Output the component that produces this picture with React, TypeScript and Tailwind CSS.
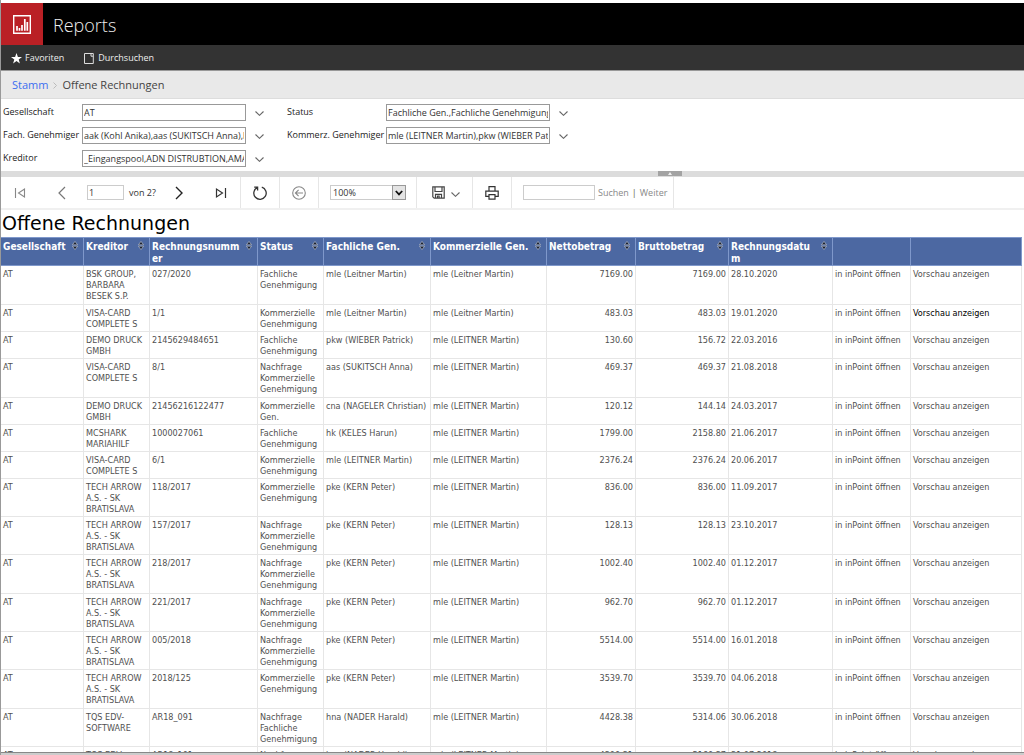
import React from "react";

type Row = {
  creditor: string;
  no: string;
  status: string;
  fach: string;
  komm: string;
  net: string;
  gross: string;
  date: string;
  tall?: boolean;
  active?: boolean;
};

const LM = "mle (LEITNER Martin)";
const TECH = "TECH ARROW\nA.S. - SK\nBRATISLAVA";
const KG = "Kommerzielle\nGenehmigung";
const NKG = "Nachfrage\nKommerzielle\nGenehmigung";

const rows: Row[] = [
  { creditor: "BSK GROUP,\nBARBARA\nBESEK S.P.", no: "027/2020", status: "Fachliche\nGenehmigung", fach: "mle (Leitner Martin)", komm: "mle (Leitner Martin)", net: "7169.00", gross: "7169.00", date: "28.10.2020", tall: true },
  { creditor: "VISA-CARD\nCOMPLETE S", no: "1/1", status: KG, fach: "mle (Leitner Martin)", komm: "mle (Leitner Martin)", net: "483.03", gross: "483.03", date: "19.01.2020", active: true },
  { creditor: "DEMO DRUCK\nGMBH", no: "2145629484651", status: "Fachliche\nGenehmigung", fach: "pkw (WIEBER Patrick)", komm: LM, net: "130.60", gross: "156.72", date: "22.03.2016" },
  { creditor: "VISA-CARD\nCOMPLETE S", no: "8/1", status: NKG, fach: "aas (SUKITSCH Anna)", komm: LM, net: "469.37", gross: "469.37", date: "21.08.2018", tall: true },
  { creditor: "DEMO DRUCK\nGMBH", no: "21456216122477", status: "Kommerzielle\nGen.", fach: "cna (NAGELER Christian)", komm: LM, net: "120.12", gross: "144.14", date: "24.03.2017" },
  { creditor: "MCSHARK\nMARIAHILF", no: "1000027061", status: "Fachliche\nGenehmigung", fach: "hk (KELES Harun)", komm: LM, net: "1799.00", gross: "2158.80", date: "21.06.2017" },
  { creditor: "VISA-CARD\nCOMPLETE S", no: "6/1", status: KG, fach: LM, komm: LM, net: "2376.24", gross: "2376.24", date: "20.06.2017" },
  { creditor: TECH, no: "118/2017", status: KG, fach: "pke (KERN Peter)", komm: LM, net: "836.00", gross: "836.00", date: "11.09.2017" },
  { creditor: TECH, no: "157/2017", status: NKG, fach: "pke (KERN Peter)", komm: LM, net: "128.13", gross: "128.13", date: "23.10.2017" },
  { creditor: TECH, no: "218/2017", status: NKG, fach: "pke (KERN Peter)", komm: LM, net: "1002.40", gross: "1002.40", date: "01.12.2017", tall: true },
  { creditor: TECH, no: "221/2017", status: NKG, fach: "pke (KERN Peter)", komm: LM, net: "962.70", gross: "962.70", date: "01.12.2017" },
  { creditor: TECH, no: "005/2018", status: NKG, fach: "pke (KERN Peter)", komm: LM, net: "5514.00", gross: "5514.00", date: "16.01.2018" },
  { creditor: TECH, no: "2018/125", status: KG, fach: "pke (KERN Peter)", komm: LM, net: "3539.70", gross: "3539.70", date: "04.06.2018", tall: true },
  { creditor: "TQS EDV-\nSOFTWARE", no: "AR18_091", status: "Nachfrage\nFachliche\nGenehmigung", fach: "hna (NADER Harald)", komm: LM, net: "4428.38", gross: "5314.06", date: "30.06.2018" },
  { creditor: "TQS EDV-\nSOFTWARE", no: "AR18_101", status: "Nachfrage\nFachliche\nGenehmigung", fach: "hna (NADER Harald)", komm: LM, net: "4300.31", gross: "5160.37", date: "31.07.2018" },
];

const columns = [
  { label: "Gesellschaft", width: "w-[83px]" },
  { label: "Kreditor", width: "w-[66px]" },
  { label: "Rechnungsnumm\ner", width: "w-[108px]" },
  { label: "Status", width: "w-[66px]" },
  { label: "Fachliche Gen.", width: "w-[107px]" },
  { label: "Kommerzielle Gen.", width: "w-[116px]" },
  { label: "Nettobetrag", width: "w-[89px]" },
  { label: "Bruttobetrag", width: "w-[93px]" },
  { label: "Rechnungsdatu\nm", width: "w-[104px]" },
  { label: "", width: "w-[78px]" },
  { label: "", width: "" },
];

function Chevron() {
  return (
    <svg width="9" height="5" viewBox="0 0 9 5" fill="none" stroke="#666" strokeWidth="1.1">
      <path d="M.5.5l4 3.8 4-3.8" />
    </svg>
  );
}

function SortIcon() {
  return (
    <svg width="6" height="9" viewBox="0 0 6 9" fill="#1c2232" stroke="#c8ccd4" strokeWidth=".6">
      <path d="M3 .4L5.6 3.8H.4zM3 8.6L.4 5.2h5.2z" />
    </svg>
  );
}

function Param({ id, label, value, wide }: { id: string; label: string; value: string; wide?: boolean }) {
  return (
    <div className="flex h-[18px] items-center">
      <label htmlFor={id} className={wide ? "w-[99px] whitespace-nowrap" : "w-[79px] whitespace-nowrap"}>
        {label}
      </label>
      <input
        id={id}
        defaultValue={value}
        className="h-[17px] w-[164px] border border-[#999] bg-white px-px text-[9px] text-[#333] outline-none"
      />
      <button type="button" aria-label={label + " auswählen"} className="ml-2 flex h-4 w-[10px] items-center justify-center pt-[2px]">
        <Chevron />
      </button>
    </div>
  );
}

function Toolbar() {
  return (
    <div role="toolbar" className="flex h-[33px] shrink-0 items-stretch border-b-2 border-[#f0f0f0] text-[9px] text-[#333]">
      <div className="flex w-[240px] items-center border-r border-[#e6e6e6] pl-[13px]">
        <button type="button" aria-label="Erste Seite">
          <svg width="12" height="12" viewBox="0 0 12 12" fill="none" stroke="#888" strokeWidth="1.1">
            <path d="M1.5 1v10M10.5 2v8L4.5 6z" />
          </svg>
        </button>
        <button type="button" aria-label="Vorherige Seite" className="ml-8">
          <svg width="8" height="14" viewBox="0 0 8 14" fill="none" stroke="#777" strokeWidth="1.2">
            <path d="M7 1L1 7l6 6" />
          </svg>
        </button>
        <input aria-label="Seite" defaultValue="1" className="ml-[21px] h-[15px] w-[37px] border border-[#ccc] px-px text-[9px] outline-none" />
        <span className="ml-[5px] w-[28px] whitespace-nowrap">von 2?</span>
        <button type="button" aria-label="Nächste Seite" className="ml-[18px]">
          <svg width="8" height="14" viewBox="0 0 8 14" fill="none" stroke="#222" strokeWidth="1.4">
            <path d="M1 1l6 6-6 6" />
          </svg>
        </button>
        <button type="button" aria-label="Letzte Seite" className="ml-8">
          <svg width="12" height="12" viewBox="0 0 12 12" fill="none" stroke="#333" strokeWidth="1.2">
            <path d="M10.5 1v10M1.5 2v8l6-4z" />
          </svg>
        </button>
      </div>
      <div className="flex w-[39px] items-center justify-center border-r border-[#e6e6e6]">
        <button type="button" aria-label="Aktualisieren">
          <svg width="16" height="16" viewBox="0 0 16 16" fill="none" stroke="#333" strokeWidth="1.3">
            <path d="M9.8 2.2a6.2 6.2 0 1 1-4.6.4M2.2 2.2h3.4v3.4" />
          </svg>
        </button>
      </div>
      <div className="flex w-[39px] items-center justify-center border-r border-[#e6e6e6]">
        <button type="button" aria-label="Zurück">
          <svg width="14" height="14" viewBox="0 0 14 14" fill="none" stroke="#888" strokeWidth="1.1">
            <circle cx="7" cy="7" r="6.3" />
            <path d="M11 7H3.4M6.6 3.8L3.4 7l3.2 3.2" />
          </svg>
        </button>
      </div>
      <div className="flex w-[98px] items-center border-r border-[#e6e6e6] pl-[11px]">
        <div className="relative h-[15px] w-[76px] border border-[#ccc]">
          <select aria-label="Zoom" className="block h-full w-full appearance-none bg-white pl-[2px] text-[9px] leading-[13px] outline-none">
            <option>100%</option>
          </select>
          <span className="pointer-events-none absolute -top-px -right-px flex h-[15px] w-[14px] items-center justify-center border border-[#999] bg-[#e4e4e4]">
            <svg width="8" height="6" viewBox="0 0 8 6" fill="none" stroke="#111" strokeWidth="1.8">
              <path d="M.8 1L4 4.4 7.2 1" />
            </svg>
          </span>
        </div>
      </div>
      <div className="flex w-[56px] items-center border-r border-[#e6e6e6] pl-[15px]">
        <button type="button" aria-label="Exportieren" className="flex items-center gap-[6px]">
          <svg width="13" height="13" viewBox="0 0 13 13" fill="none" stroke="#444" strokeWidth="1.2">
            <path d="M.8.8h11.4v11.4H2.2L.8 10.8zM3 .8v4.7h7V.8M3.5 12.2V8.4h6v3.8M5.5 12V10h1.6v2" />
          </svg>
          <span className="pt-1">
            <Chevron />
          </span>
        </button>
      </div>
      <div className="flex w-[39px] items-center justify-center border-r border-[#e6e6e6]">
        <button type="button" aria-label="Drucken">
          <svg width="14" height="14" viewBox="0 0 14 14" fill="none" stroke="#333" strokeWidth="1.2">
            <path d="M4 5V.7h6V5M4 10.4H.8V5.2h12.4v5.2H10M4 8.6h6v4.6H4z" />
          </svg>
        </button>
      </div>
      <div className="flex w-[162px] items-center border-r border-[#e6e6e6] pl-[11px] text-[#888]">
        <input aria-label="Suchbegriff" className="h-[15px] w-[72px] border border-[#ccc] px-px text-[9px] outline-none" />
        <span className="ml-[3px] flex gap-[3px] pt-px whitespace-nowrap">
          <button type="button">Suchen</button>
          <span className="text-[#665544]">|</span>
          <button type="button">Weiter</button>
        </span>
      </div>
    </div>
  );
}

export default function App() {
  return (
    <div className="flex h-screen flex-col overflow-hidden border-l border-[#999] bg-white font-['Open_Sans','Noto_Sans',sans-serif] text-[9px] text-[#222]">
      <header className="mt-[3px] flex h-[42px] shrink-0 bg-black">
        <div className="flex w-[42px] items-center justify-center bg-[#ba2025]">
          <svg width="18" height="19" viewBox="0 0 18 19" fill="none" stroke="#fff">
            <path d="M.7.7h16.6v17.6H.7z" strokeWidth="1.4" />
            <path d="M4 11v4.8M6.5 13v2.8M9 10v5.8M11.8 4v11.8M14.3 7v8.8" strokeWidth="1.7" />
          </svg>
        </div>
        <h1 className="flex items-center pt-[2px] pl-[10px] text-[18px] font-light text-[#eee]">Reports</h1>
      </header>
      <nav className="flex h-[25px] shrink-0 items-center bg-[#333] pt-px pl-[10px] text-[#eee]">
        <a href="#favoriten" className="flex items-center gap-[3px]">
          <svg width="11" height="11" viewBox="0 0 11 11" fill="#fff">
            <path d="M5.5 0l1.4 3.9H11L7.7 6.4 8.9 10.6 5.5 8.1 2.1 10.6l1.2-4.2L0 3.9h4.1z" />
          </svg>
          Favoriten
        </a>
        <a href="#durchsuchen" className="ml-5 flex items-center gap-1">
          <svg width="10" height="11" viewBox="0 0 10 11" fill="none" stroke="#ddd">
            <path d="M.5.5h8.8v10H.5zM7 .8v2.4h2.2" />
          </svg>
          Durchsuchen
        </a>
      </nav>
      <nav aria-label="Pfad" className="flex h-[29px] shrink-0 items-center border-t border-b border-t-[#999] border-b-[#ddd] bg-[#e9e9e9] pt-px pl-[11px] text-[11px] text-[#444]">
        <a href="#stamm" className="text-[#3c6ef0]">Stamm</a>
        <svg className="mx-[5px]" width="4" height="7" viewBox="0 0 4 7" fill="none" stroke="#bbb">
          <path d="M.5.5l3 3-3 3" />
        </svg>
        <span>Offene Rechnungen</span>
      </nav>
      <form className="grid h-[72px] shrink-0 grid-cols-[284px_auto] content-start justify-start gap-y-[5px] pt-1 pl-[2px]">
        <Param id="gesellschaft" label="Gesellschaft" value="AT" />
        <Param id="status" label="Status" value="Fachliche Gen.,Fachliche Genehmigung" wide />
        <Param id="fach" label="Fach. Genehmiger" value="aak (Kohl Anika),aas (SUKITSCH Anna),bhe (HERZOG Bernd)" />
        <Param id="kommerz" label="Kommerz. Genehmiger" value="mle (LEITNER Martin),pkw (WIEBER Patrick)" wide />
        <Param id="kreditor" label="Kreditor" value="_Eingangspool,ADN DISTRUBTION,AMAZON" />
      </form>
      <div className="flex h-[6px] shrink-0 justify-center bg-[#dcdcdc] pl-[315px]">
        <button type="button" aria-label="Parameter ausblenden" className="flex h-[5px] w-6 items-center justify-center bg-[#a3a3a3]">
          <svg width="4" height="3" viewBox="0 0 4 3" fill="#eee">
            <path d="M2 0l2 3H0z" />
          </svg>
        </button>
      </div>
      <Toolbar />
      <main className="min-h-0 flex-1 overflow-hidden border-b border-[#888] pr-[2px]">
        <h2 className="h-[27px] pl-px font-['DejaVu_Sans',sans-serif] text-[19px] leading-[27px] text-black">Offene Rechnungen</h2>
        <table className="w-full table-fixed border-separate border-spacing-0 font-['DejaVu_Sans_Condensed','Noto_Sans',sans-serif] text-[9px] leading-[11px] text-[#505050]">
          <thead>
            <tr className="h-[29px] bg-[#4c68a2] text-left align-top text-[10px] leading-3 text-white">
              {columns.map((c, i) => (
                <th key={i} className={"border-t border-r border-b border-[#7f98cb] px-[2px] pt-[3px] pb-0 font-bold " + c.width}>
                  {c.label && (
                    <div className="flex items-start justify-between">
                      <span className="whitespace-pre">{c.label}</span>
                      <button type="button" aria-label="Sortieren" className="mr-[3px]">
                        <SortIcon />
                      </button>
                    </div>
                  )}
                </th>
              ))}
            </tr>
          </thead>
          <tbody>
            {rows.map((r, i) => {
              const cells = ["AT", r.creditor, r.no, r.status, r.fach, r.komm, r.net, r.gross, r.date];
              return (
                <tr key={i} className={r.tall ? "h-[39px] align-top" : "align-top"}>
                  {cells.map((v, j) => (
                    <td key={j} className={"whitespace-pre border-r border-b border-[#e6e6e6] px-[2px] pt-[3px] pb-px " + (j === 6 || j === 7 ? "text-right" : "")}>
                      {v}
                    </td>
                  ))}
                  <td className="border-r border-b border-[#e6e6e6] px-[2px] pt-[3px] pb-px whitespace-nowrap">
                    <a href="#inpoint">in inPoint öffnen</a>
                  </td>
                  <td className="border-r border-b border-[#e6e6e6] px-[2px] pt-[3px] pb-px whitespace-nowrap">
                    <a href="#vorschau" className={r.active ? "text-black" : ""}>Vorschau anzeigen</a>
                  </td>
                </tr>
              );
            })}
          </tbody>
        </table>
      </main>
      <div className="h-[2px] shrink-0 bg-[#ccc]" />
    </div>
  );
}
